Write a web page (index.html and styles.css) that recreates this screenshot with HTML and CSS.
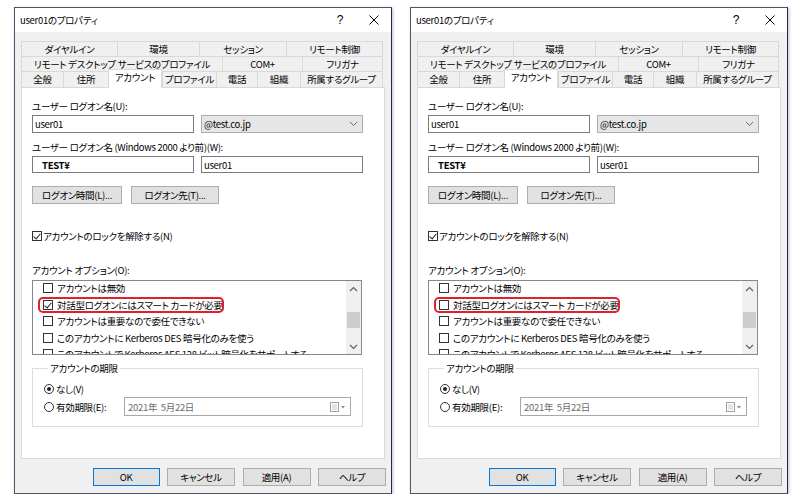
FILE: index.html
```html
<!DOCTYPE html>
<html>
<head>
  <meta charset="utf-8">
  <title>user01のプロパティ</title>
  <link rel="stylesheet" href="styles.css">
</head>
<body>
  <div class="page">

    <!-- before: smart card required -->
    <div class="dialog">
      <div class="titlebar">
        <span class="title">user01のプロパティ</span>
        <span class="help">?</span>
        <span class="close"><svg width="10" height="10" viewBox="0 0 10 10"><path d="M0.5 0.5L9.5 9.5M9.5 0.5L0.5 9.5" stroke="#000" stroke-width="1"/></svg></span>
      </div>
      <div class="dialog-body">
        <div class="tabs">
          <div class="tab-row row1">
            <div class="tab">ダイヤルイン</div>
            <div class="tab">環境</div>
            <div class="tab">セッション</div>
            <div class="tab">リモート制御</div>
          </div>
          <div class="tab-row row2">
            <div class="tab">リモート デスクトップ サービスのプロファイル</div>
            <div class="tab">COM+</div>
            <div class="tab">フリガナ</div>
          </div>
          <div class="tab-row row3">
            <div class="tab">全般</div>
            <div class="tab">住所</div>
            <div class="tab active">アカウント</div>
            <div class="tab">プロファイル</div>
            <div class="tab">電話</div>
            <div class="tab">組織</div>
            <div class="tab">所属するグループ</div>
          </div>
        </div>

        <div class="panel">
          <div class="label first">ユーザー ログオン名(U):</div>
          <div class="field-row tall">
            <div class="input">user01</div>
            <div class="combo">@test.co.jp<svg width="9" height="6" viewBox="0 0 9 6"><path d="M1 1L4.5 4.5L8 1" fill="none" stroke="#6a6a6a" stroke-width="1"/></svg></div>
          </div>
          <div class="label">ユーザー ログオン名 (Windows 2000 より前)(W):</div>
          <div class="field-row">
            <div class="input domain">TEST¥</div>
            <div class="input">user01</div>
          </div>
          <div class="btn-row">
            <div class="btn logon-hours">ログオン時間(L)...</div>
            <div class="btn logon-to">ログオン先(T)...</div>
          </div>
          <div class="check-line"><span class="cb checked"></span>アカウントのロックを解除する(N)</div>
          <div class="label options">アカウント オプション(O):</div>
          <div class="listbox">
            <div class="list-items">
              <div class="item"><span class="cb"></span>アカウントは無効</div>
              <div class="item"><span class="cb checked"></span>対話型ログオンにはスマート カードが必要</div>
              <div class="item"><span class="cb"></span>アカウントは重要なので委任できない</div>
              <div class="item"><span class="cb"></span>このアカウントに Kerberos DES 暗号化のみを使う</div>
              <div class="item"><span class="cb"></span>このアカウントで Kerberos AES 128 ビット暗号化をサポートする</div>
            </div>
            <div class="scrollbar">
              <div class="arrow"><svg width="9" height="6" viewBox="0 0 9 6"><path d="M1 5L4.5 1.5L8 5" fill="none" stroke="#606060" stroke-width="1.2"/></svg></div>
              <div class="track"><div class="thumb"></div></div>
              <div class="arrow"><svg width="9" height="6" viewBox="0 0 9 6"><path d="M1 1L4.5 4.5L8 1" fill="none" stroke="#606060" stroke-width="1.2"/></svg></div>
            </div>
            <div class="mark"></div>
          </div>
          <fieldset class="expiry">
            <legend>アカウントの期限</legend>
            <div class="radio-line first"><span class="radio on"></span>なし(V)</div>
            <div class="radio-line date-line">
              <span class="radio-label"><span class="radio"></span>有効期限(E):</span>
              <div class="datepicker">2021年&nbsp; 5月22日<svg width="16" height="10" viewBox="0 0 16 10"><rect x="0.5" y="0.5" width="8" height="9" fill="#fff" stroke="#a0a0a0"/><path d="M2 3h5M2 5h5M2 7h5" stroke="#c8c8c8"/><path d="M11 4h4l-2 2.5z" fill="#8a8a8a"/></svg></div>
            </div>
          </fieldset>
        </div>

        <div class="buttons">
          <div class="btn default">OK</div>
          <div class="btn">キャンセル</div>
          <div class="btn">適用(A)</div>
          <div class="btn">ヘルプ</div>
        </div>
      </div>
    </div>

    <!-- after: smart card not required -->
    <div class="dialog">
      <div class="titlebar">
        <span class="title">user01のプロパティ</span>
        <span class="help">?</span>
        <span class="close"><svg width="10" height="10" viewBox="0 0 10 10"><path d="M0.5 0.5L9.5 9.5M9.5 0.5L0.5 9.5" stroke="#000" stroke-width="1"/></svg></span>
      </div>
      <div class="dialog-body">
        <div class="tabs">
          <div class="tab-row row1">
            <div class="tab">ダイヤルイン</div>
            <div class="tab">環境</div>
            <div class="tab">セッション</div>
            <div class="tab">リモート制御</div>
          </div>
          <div class="tab-row row2">
            <div class="tab">リモート デスクトップ サービスのプロファイル</div>
            <div class="tab">COM+</div>
            <div class="tab">フリガナ</div>
          </div>
          <div class="tab-row row3">
            <div class="tab">全般</div>
            <div class="tab">住所</div>
            <div class="tab active">アカウント</div>
            <div class="tab">プロファイル</div>
            <div class="tab">電話</div>
            <div class="tab">組織</div>
            <div class="tab">所属するグループ</div>
          </div>
        </div>

        <div class="panel">
          <div class="label first">ユーザー ログオン名(U):</div>
          <div class="field-row tall">
            <div class="input">user01</div>
            <div class="combo">@test.co.jp<svg width="9" height="6" viewBox="0 0 9 6"><path d="M1 1L4.5 4.5L8 1" fill="none" stroke="#6a6a6a" stroke-width="1"/></svg></div>
          </div>
          <div class="label">ユーザー ログオン名 (Windows 2000 より前)(W):</div>
          <div class="field-row">
            <div class="input domain">TEST¥</div>
            <div class="input">user01</div>
          </div>
          <div class="btn-row">
            <div class="btn logon-hours">ログオン時間(L)...</div>
            <div class="btn logon-to">ログオン先(T)...</div>
          </div>
          <div class="check-line"><span class="cb checked"></span>アカウントのロックを解除する(N)</div>
          <div class="label options">アカウント オプション(O):</div>
          <div class="listbox">
            <div class="list-items">
              <div class="item"><span class="cb"></span>アカウントは無効</div>
              <div class="item"><span class="cb"></span>対話型ログオンにはスマート カードが必要</div>
              <div class="item"><span class="cb"></span>アカウントは重要なので委任できない</div>
              <div class="item"><span class="cb"></span>このアカウントに Kerberos DES 暗号化のみを使う</div>
              <div class="item"><span class="cb"></span>このアカウントで Kerberos AES 128 ビット暗号化をサポートする</div>
            </div>
            <div class="scrollbar">
              <div class="arrow"><svg width="9" height="6" viewBox="0 0 9 6"><path d="M1 5L4.5 1.5L8 5" fill="none" stroke="#606060" stroke-width="1.2"/></svg></div>
              <div class="track"><div class="thumb"></div></div>
              <div class="arrow"><svg width="9" height="6" viewBox="0 0 9 6"><path d="M1 1L4.5 4.5L8 1" fill="none" stroke="#606060" stroke-width="1.2"/></svg></div>
            </div>
            <div class="mark"></div>
          </div>
          <fieldset class="expiry">
            <legend>アカウントの期限</legend>
            <div class="radio-line first"><span class="radio on"></span>なし(V)</div>
            <div class="radio-line date-line">
              <span class="radio-label"><span class="radio"></span>有効期限(E):</span>
              <div class="datepicker">2021年&nbsp; 5月22日<svg width="16" height="10" viewBox="0 0 16 10"><rect x="0.5" y="0.5" width="8" height="9" fill="#fff" stroke="#a0a0a0"/><path d="M2 3h5M2 5h5M2 7h5" stroke="#c8c8c8"/><path d="M11 4h4l-2 2.5z" fill="#8a8a8a"/></svg></div>
            </div>
          </fieldset>
        </div>

        <div class="buttons">
          <div class="btn default">OK</div>
          <div class="btn">キャンセル</div>
          <div class="btn">適用(A)</div>
          <div class="btn">ヘルプ</div>
        </div>
      </div>
    </div>

  </div>
</body>
</html>
```

FILE: styles.css
```css
body {
  margin: 0;
  background: #fff;
  font-family: "Noto Sans CJK JP", "Noto Sans", sans-serif;
  font-size: 9.5px;
  letter-spacing: -0.3px;
  font-feature-settings: "palt";
  color: #000;
}

.page {
  display: flex;
  gap: 18px;
  padding: 7px 0 0 14px;
}

/* window frame */
.dialog {
  width: 378px;
  height: 487px;
  box-sizing: border-box;
  border: 1px solid #4d5568;
  border-right-color: #1c2b55;
  background: #f0f0f0;
  display: flex;
  flex-direction: column;
  box-shadow: 1px 1px 3px rgba(0, 0, 0, 0.25);
}

.titlebar {
  height: 24px;
  background: #fff;
  display: flex;
  align-items: center;
  padding-left: 5px;
}

.title {
  flex: 1;
  line-height: 14px;
}

.help,
.close {
  width: 34px;
  text-align: center;
  font-family: "Liberation Sans", sans-serif;
  font-size: 12px;
  line-height: 14px;
}

.close svg {
  display: block;
  margin: 0 auto;
}

.dialog-body {
  flex: 1;
  padding: 9px 6px 0 6px;
  display: flex;
  flex-direction: column;
}

/* tabs */
.tabs {
  width: 362px;
}

.tab-row {
  display: grid;
  height: 15px;
}

.row1 { grid-template-columns: 96px 82px 87px 97px; }
.row2 { grid-template-columns: 201px 80px 81px; }
.row3 { grid-template-columns: 42px 45px 54px 54px 41px 43px 83px; height: 16px; }

.tab {
  box-sizing: border-box;
  border-left: 1px solid #d9d9d9;
  border-top: 1px solid #d9d9d9;
  background: #f0f0f0;
  text-align: center;
  line-height: 14px;
  white-space: nowrap;
  overflow: hidden;
}

.tab:last-child {
  border-right: 1px solid #d9d9d9;
}

.tab.active {
  background: #fff;
  border-right: 1px solid #d9d9d9;
  margin-top: -2px;
  height: 19px;
  line-height: 15px;
  position: relative;
  z-index: 1;
}

/* tab page */
.panel {
  width: 364px;
  height: 372px;
  box-sizing: border-box;
  border: 1px solid #d9d9d9;
  background: #fff;
  padding-left: 10px;
}

.label {
  line-height: 14px;
  margin-top: 7px;
}

.label.first { margin-top: 11px; }
.label.options { margin-top: 20px; }

.field-row {
  display: flex;
  gap: 7px;
  margin-top: 2px;
  height: 17px;
}

.field-row.tall { height: 18px; }

.input,
.combo {
  width: 162px;
  box-sizing: border-box;
  border: 1px solid #7a7a7a;
  background: #fff;
  padding-left: 2px;
  display: flex;
  align-items: center;
}

.input.domain {
  padding-left: 9px;
  font-weight: bold;
}

.combo {
  background: #e6e6e6;
  border-color: #adadad;
  justify-content: space-between;
  padding-right: 4px;
}

.btn-row {
  display: flex;
  gap: 9px;
  margin-top: 13px;
  height: 18px;
}

.btn {
  box-sizing: border-box;
  border: 1px solid #adadad;
  background: #e1e1e1;
  display: flex;
  align-items: center;
  justify-content: center;
  width: 68px;
}

.btn.logon-hours { width: 90px; }
.btn.logon-to { width: 88px; }

.btn.default {
  border-color: #0078d7;
  width: 67px;
}

.check-line {
  margin-top: 25px;
  line-height: 14px;
  display: flex;
  align-items: center;
}

/* checkboxes */
.cb {
  width: 10px;
  height: 10px;
  box-sizing: border-box;
  border: 1px solid #333;
  background: #fff;
  margin-right: 1px;
  position: relative;
  flex: none;
}

.cb.checked::after {
  content: "";
  position: absolute;
  left: 2px;
  top: 0px;
  width: 3px;
  height: 6px;
  border: solid #222;
  border-width: 0 1px 1px 0;
  transform: rotate(40deg);
}

/* option list */
.listbox {
  margin-top: 3px;
  width: 330px;
  height: 75px;
  box-sizing: border-box;
  border: 1px solid #828790;
  display: flex;
  position: relative;
  overflow: hidden;
}

.list-items {
  flex: 1;
  margin-top: -1px;
  overflow: hidden;
}

.item {
  height: 16.5px;
  display: flex;
  align-items: center;
  white-space: nowrap;
}

.item .cb {
  margin: 0 4px 0 10px;
}

.scrollbar {
  width: 15px;
  background: #f0f0f0;
  display: flex;
  flex-direction: column;
}

.arrow {
  height: 15px;
  display: flex;
  align-items: center;
  justify-content: center;
}

.track {
  flex: 1;
}

.thumb {
  margin: 16px 1px 0;
  height: 16px;
  background: #cdcdcd;
}

/* red annotation */
.mark {
  position: absolute;
  left: 5px;
  top: 16px;
  width: 186px;
  height: 16px;
  box-sizing: border-box;
  border: 2px solid #e0202e;
  border-radius: 5px;
}

/* expiry group */
.expiry {
  margin: 6px 0 0 0;
  padding: 0 0 10px 11px;
  width: 331px;
  box-sizing: border-box;
  border: 1px solid #dcdcdc;
  min-width: 0;
}

.expiry legend {
  padding: 0 2px;
  margin-left: 4px;
  line-height: 14px;
}

.radio-line {
  display: flex;
  align-items: center;
  line-height: 14px;
  margin-top: 1px;
}

.radio-line.first { margin-top: 7px; }

.date-line {
  height: 19px;
}

.radio-label {
  width: 80px;
  display: flex;
  align-items: center;
}

.radio {
  width: 10px;
  height: 10px;
  box-sizing: border-box;
  border: 1px solid #333;
  border-radius: 50%;
  background: #fff;
  margin-right: 2px;
  position: relative;
  flex: none;
}

.radio.on::after {
  content: "";
  position: absolute;
  left: 2px;
  top: 2px;
  width: 4px;
  height: 4px;
  border-radius: 50%;
  background: #222;
}

.datepicker {
  width: 227px;
  height: 19px;
  box-sizing: border-box;
  border: 1px solid #a8a8a8;
  background: #fff;
  color: #6d6d6d;
  padding: 0 4px 0 3px;
  display: flex;
  align-items: center;
  justify-content: space-between;
}

/* dialog buttons */
.buttons {
  display: flex;
  justify-content: flex-end;
  gap: 7.5px;
  margin: 9px -1px 0 0;
  height: 18px;
}
```
